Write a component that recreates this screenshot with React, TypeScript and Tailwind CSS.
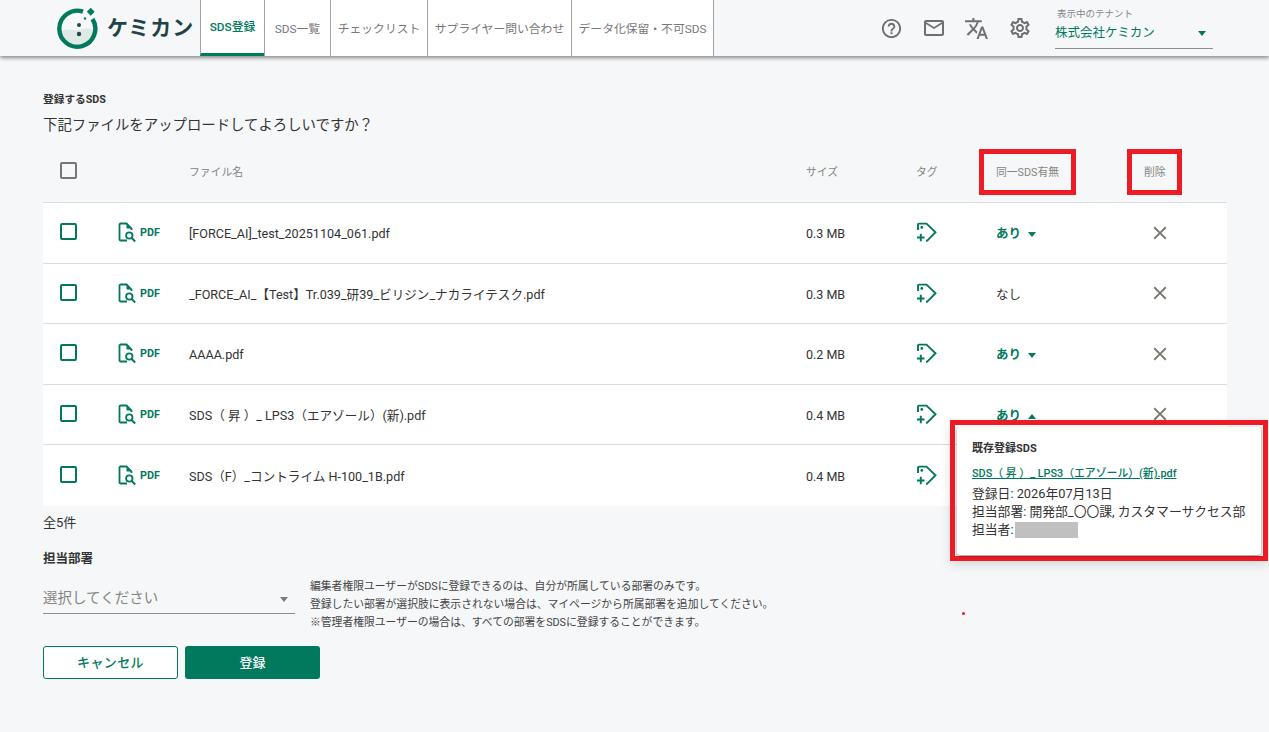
import { MdClose, MdHelpOutline, MdMailOutline, MdOutlineSettings, MdTranslate } from "react-icons/md"

const rows = [
  { name: "[FORCE_AI]_test_20251104_061.pdf", size: "0.3 MB", same: "closed" },
  { name: "_FORCE_AI_【Test】Tr.039_研39_ビリジン_ナカライテスク.pdf", size: "0.3 MB", same: "none" },
  { name: "AAAA.pdf", size: "0.2 MB", same: "closed" },
  { name: "SDS（ 昇 ）_ LPS3（エアゾール）(新).pdf", size: "0.4 MB", same: "open" },
  { name: "SDS（F）_コントライム H-100_1B.pdf", size: "0.4 MB", same: "" },
]

const tabs = [
  { label: "SDS登録", w: "w-[64px]", active: true },
  { label: "SDS一覧", w: "w-[66px]" },
  { label: "チェックリスト", w: "w-[97px]" },
  { label: "サプライヤー問い合わせ", w: "w-[144px]" },
  { label: "データ化保留・不可SDS", w: "w-[143px]" },
]

const gridCols = "grid grid-cols-[75px_71px_617px_110px_80px_128px_72px_1fr] items-center"

function Logo() {
  return (
    <div className="flex items-center gap-[8px] whitespace-nowrap">
      <svg width="42" height="42" viewBox="0 0 42 42" fill="none" className="flex-none">
        <path d="M3 26 C8 19 15 24 21 23 C27 22 31 20 36 23 C35 32 28 37 20 37 C11 37 5 33 3 26Z" fill="#dfeae7" />
        <path d="M26 4.6 A18 18 0 1 0 35.5 12" stroke="#00795c" strokeWidth="4.4" />
        <rect x="31" y="2" width="5.5" height="5.5" transform="rotate(45 33.75 4.75)" fill="#00795c" />
        <circle cx="22" cy="18" r="2" fill="#1e4a4a" />
        <circle cx="22" cy="27" r="2.2" fill="#1e4a4a" />
        <circle cx="28" cy="11.5" r="1.2" fill="#00795c" />
      </svg>
      <span className="text-[21px] font-bold tracking-[1px] text-[#1f4447] leading-none">ケミカン</span>
    </div>
  )
}

function PdfIcon() {
  return (
    <svg width="20" height="21" viewBox="0 0 20 21" fill="none">
      <path d="M9 18.5 H2.6 A1.1 1.1 0 0 1 1.5 17.4 V2.6 A1.1 1.1 0 0 1 2.6 1.5 H8.5 L13.5 6.5 V8" stroke="#00795c" strokeWidth="1.8" />
      <path d="M8.5 1 L14 6.5 H8.5Z" fill="#00795c" />
      <circle cx="11.3" cy="13.5" r="3.2" stroke="#00795c" strokeWidth="1.8" />
      <path d="M13.7 16 L17.2 19.5" stroke="#00795c" strokeWidth="1.9" />
    </svg>
  )
}

function TagIcon() {
  return (
    <svg width="22" height="21" viewBox="0 0 22 21" fill="none">
      <path d="M2 8 V2.6 A1 1 0 0 1 3 1.6 H10.5 L19.5 10.2 L11 18.8 H10" stroke="#00795c" strokeWidth="1.9" />
      <circle cx="5.8" cy="5.4" r="1.4" fill="#00795c" />
      <path d="M1 15.5 H8.5 M4.8 11.7 V19.3" stroke="#00795c" strokeWidth="1.9" />
    </svg>
  )
}

function Checkbox({ gray }: { gray?: boolean }) {
  return (
    <div className={`w-[17px] h-[17px] rounded-[2px] border-2 ml-[17px] ${gray ? "mb-[5px] border-[#75757a]" : "mb-[2px] border-[#00795c]"}`} />
  )
}

function Arrow({ up }: { up?: boolean }) {
  return (
    <span
      className={`ml-[7px] w-0 h-0 border-x-[4.5px] border-x-transparent ${up ? "border-b-[5px] border-b-[#00795c]" : "border-t-[5px] border-t-[#00795c]"}`}
    />
  )
}

function SameCell({ same }: { same: string }) {
  if (same === "none") return <span className="text-[12.5px] text-[#333] pt-[4px]">なし</span>
  if (same === "") return null
  return (
    <span className="flex items-center text-[12.5px] font-bold text-[#00795c] pt-[4px]">
      あり
      <Arrow up={same === "open"} />
    </span>
  )
}

export default function App() {
  return (
    <div className="relative min-h-[732px] bg-[#f6f7f9] text-[#333] font-['Roboto','Noto_Sans_CJK_JP',sans-serif] overflow-hidden">
      <header className="h-[56px] flex items-stretch bg-[#f6f7f9] shadow-[0_2px_4px_rgba(0,0,0,0.45)] pl-[57px]">
        <div className="w-[143px] flex items-center">
          <Logo />
        </div>
        <nav className="flex">
          {tabs.map((t) => (
            <div
              key={t.label}
              className={`${t.w} flex items-center justify-center bg-white border-l border-[#a3a3a3] last:border-r text-[11.8px] whitespace-nowrap pt-[3px] ${
                t.active ? "border-b-[3px] border-b-[#00795c] text-[#00795c] font-medium" : "text-[#77777a]"
              }`}
            >
              {t.label}
            </div>
          ))}
        </nav>
        <div className="flex items-center ml-[165px] text-[#6f6f6f]">
          <MdHelpOutline size={23} className="ml-[1px]" />
          <MdMailOutline size={24} className="ml-[19px]" />
          <MdTranslate size={25} className="ml-[18px]" />
          <MdOutlineSettings size={24} className="ml-[19px]" />
        </div>
        <div className="ml-[23px] w-[158px] h-[50px] flex flex-col">
          <span className="text-[9.5px] text-[#888] leading-none mt-[9px] pl-[2px]">表示中のテナント</span>
          <div className="flex items-center justify-between border-b border-[#8c8c8c] h-[28px] mt-[2px] pr-[7px] pb-[2px]">
            <span className="text-[12.5px] text-[#00795c]">株式会社ケミカン</span>
            <span className="w-0 h-0 border-x-[4.5px] border-x-transparent border-t-[5px] border-t-[#00795c]" />
          </div>
        </div>
      </header>

      <main className="px-[43px] w-[1227px] box-content">
        <h2 className="text-[10.7px] font-bold leading-none mt-[39px]">登録するSDS</h2>
        <p className="text-[14.4px] leading-none mt-[13px]">下記ファイルをアップロードしてよろしいですか？</p>

        <div className={`${gridCols} w-[1184px] h-[61px] pt-[2px] mt-[9px] border-b border-[#dcdcdc] text-[10.8px] text-[#85857f]`}>
          <Checkbox gray />
          <span />
          <span>ファイル名</span>
          <span>サイズ</span>
          <span>タグ</span>
          <span className="whitespace-nowrap">同一SDS有無</span>
          <span className="pl-[20px]">削除</span>
          <span />
        </div>

        <div className="w-[1184px] bg-white">
          {rows.map((r) => (
            <div key={r.name} className={`${gridCols} h-[60.5px] border-b border-[#dcdcdc] last:border-b-0`}>
              <Checkbox />
              <span className="flex items-center gap-[2px]">
                <PdfIcon />
                <span className="text-[10.8px] font-bold text-[#00795c] pt-[1px]">PDF</span>
              </span>
              <span className="text-[12.6px] text-[#333] whitespace-nowrap pt-[4px]">{r.name}</span>
              <span className="text-[12.5px] text-[#333] pt-[4px]">{r.size}</span>
              <TagIcon />
              <SameCell same={r.same} />
              <span className="flex justify-center">
                {r.same !== "" && <MdClose size={22} className="text-[#77776f]" />}
              </span>
              <span />
            </div>
          ))}
        </div>

        <p className="text-[13px] leading-none mt-[10px]">全5件</p>
        <h3 className="text-[12.5px] font-bold leading-none mt-[24px]">担当部署</h3>

        <div className="flex items-start mt-[12px]">
          <div className="w-[252px] h-[30px] border-b border-[#8c8c8c] flex items-center justify-between pr-[7px] text-[14.5px] text-[#85857f] mt-[7px]">
            選択してください
            <span className="w-0 h-0 border-x-[4.5px] border-x-transparent border-t-[5px] border-t-[#7a7a7a] mt-[2px]" />
          </div>
          <div className="ml-[15px] pt-[1px] text-[10.8px] leading-[18px] text-[#444]">
            <p>編集者権限ユーザーがSDSに登録できるのは、自分が所属している部署のみです。</p>
            <p>登録したい部署が選択肢に表示されない場合は、マイページから所属部署を追加してください。</p>
            <p>※管理者権限ユーザーの場合は、すべての部署をSDSに登録することができます。</p>
          </div>
        </div>

        <div className="flex gap-[7px] mt-[14px]">
          <button className="w-[135px] h-[33px] rounded-[3px] border border-[#00795c] bg-white text-[13px] font-medium text-[#00795c] tracking-[0.4px]">
            キャンセル
          </button>
          <button className="w-[135px] h-[33px] rounded-[3px] bg-[#00795c] text-[13px] font-medium text-white">
            登録
          </button>
        </div>
      </main>

      {/* red annotation boxes */}
      <div className="absolute left-[979px] top-[149px] w-[97px] h-[46px] border-[5px] border-[#ed1c24]" />
      <div className="absolute left-[1127px] top-[149px] w-[55px] h-[46px] border-[5px] border-[#ed1c24]" />
      <div className="absolute left-[962px] top-[612px] w-[3px] h-[3px] rounded-full bg-[#ed1c24]" />

      <div className="absolute left-[950px] top-[420px] w-[318px] h-[141px] border-[5px] border-[#ed1c24] shadow-[0_4px_10px_rgba(0,0,0,0.12)] p-[2px]">
        <div className="w-[304px] h-[128px] bg-white rounded-[3px] shadow-[0_1px_3px_rgba(0,0,0,0.45)] px-[15px] pt-[16px]">
          <p className="text-[11px] font-bold leading-none text-[#333]">既存登録SDS</p>
          <p className="text-[10.85px] font-medium leading-none text-[#00795c] underline mt-[15px] whitespace-nowrap">
            SDS（ 昇 ）_ LPS3（エアゾール）(新).pdf
          </p>
          <div className="text-[12.8px] leading-[18px] mt-[5px] text-[#333] whitespace-nowrap">
            <p>登録日: 2026年07月13日</p>
            <p>担当部署: 開発部_〇〇課, カスタマーサクセス部</p>
            <p className="flex items-center">
              担当者:
              <span className="inline-block w-[63px] h-[16px] bg-[#c0c0c0] ml-[1px]" />
            </p>
          </div>
        </div>
      </div>
    </div>
  )
}
